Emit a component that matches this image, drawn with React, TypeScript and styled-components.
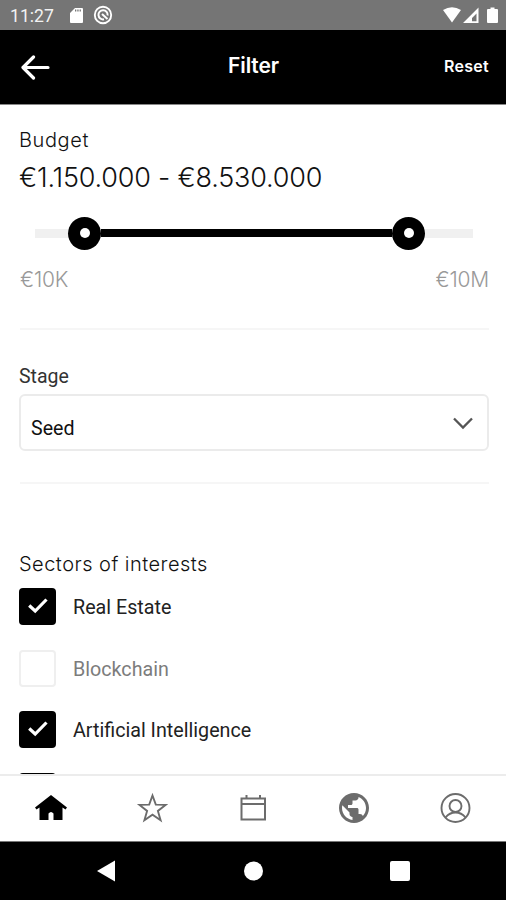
import React from "react";
import styled, { createGlobalStyle } from "styled-components";
import { MdPublic } from "react-icons/md";

const GlobalStyle = createGlobalStyle`
  * { box-sizing: border-box; }
  html, body { margin: 0; padding: 0; background: #fff; }
  body { font-family: Roboto, "Liberation Sans", sans-serif; color: #111; }
  svg { display: block; }
`;

const Screen = styled.div`
  width: 506px;
  height: 900px;
  display: flex;
  flex-direction: column;
  overflow: hidden;
  background: #fff;
`;

const StatusBar = styled.div`
  flex: none;
  height: 30px;
  display: flex;
  justify-content: space-between;
  padding: 0 6px 0 10px;
  background: #757575;
  color: #fff;
`;

const StatusGroup = styled.div`
  display: flex;
  align-items: center;
`;

const Clock = styled.span`
  width: 58px;
  padding-top: 1px;
  font-size: 17.6px;
  line-height: 28px;
  color: #f2f2f2;
`;

const Header = styled.header`
  flex: none;
  height: 75px;
  display: grid;
  grid-template-columns: 1fr auto 1fr;
  align-items: center;
  padding: 0 17px 2px 20px;
  background: #000;
  border-bottom: 1px solid #888;
  color: #fff;
`;

const IconButton = styled.button`
  width: 30px;
  padding: 2px 0 0;
  border: 0;
  background: none;
  color: inherit;
`;

const Title = styled.h1`
  margin: 0 2px 0 0;
  font: 600 21px/30px Inter, sans-serif;
  letter-spacing: -0.1px;
`;

const ResetButton = styled.button`
  justify-self: end;
  padding: 0;
  border: 0;
  background: none;
  color: inherit;
  font: 600 16px/24px Inter, sans-serif;
  letter-spacing: 0.3px;
`;

const Content = styled.main`
  flex: 1;
  min-height: 0;
  overflow: hidden;
  padding: 21px 17px 0 20px;
`;

const Label = styled.div<{ $spacing?: number }>`
  height: 28px;
  margin-left: -1px;
  font: 300 20px/28px Inter, sans-serif;
  letter-spacing: ${(p) => p.$spacing ?? 0}px;
  white-space: nowrap;
  color: #111;
`;

const FieldLabel = styled(Label)`
  font: 400 19.5px/28px Roboto, sans-serif;
  color: #333;
`;

const Amount = styled.div`
  height: 48px;
  margin-left: -1px;
  font: 300 27px/48px Inter, sans-serif;
  letter-spacing: -0.2px;
  white-space: nowrap;
  color: #111;
`;

const Slider = styled.div`
  display: flex;
  align-items: center;
  height: 34px;
  margin: 14px 15px 0;
`;

const Rail = styled.div<{ $active?: boolean; $width: number }>`
  width: ${(p) => p.$width}px;
  height: ${(p) => (p.$active ? 8 : 9)}px;
  background: ${(p) => (p.$active ? "#000" : "#f0f0f0")};
`;

const Thumb = styled.div`
  display: grid;
  place-items: center;
  width: 33px;
  height: 33px;
  border-radius: 50%;
  background: #000;
  &::after {
    content: "";
    width: 10px;
    height: 10px;
    border-radius: 50%;
    background: #fff;
  }
`;

const Bounds = styled.div`
  display: flex;
  justify-content: space-between;
  height: 30px;
  margin-top: 15px;
  font: 300 21px/30px Inter, sans-serif;
  letter-spacing: -0.2px;
  color: #999;
`;

const Divider = styled.hr<{ $top: number; $bottom: number }>`
  height: 2px;
  margin: ${(p) => p.$top}px 0 ${(p) => p.$bottom}px;
  border: 0;
  background: #f6f6f6;
`;

const Select = styled.div`
  display: flex;
  align-items: center;
  justify-content: space-between;
  height: 57px;
  margin: 3px 0 0 -1px;
  padding: 11px 14px 0 10px;
  border: 2px solid #ebebeb;
  border-radius: 6px;
  font-size: 19.6px;
  color: #111;
  svg { margin-top: -9px; }
`;

const Options = styled.div`
  padding-top: 10px;
`;

const Option = styled.label<{ $checked: boolean }>`
  display: flex;
  align-items: center;
  height: 37px;
  margin: 0 0 24.5px -1px;
  gap: 17px;
  font-size: 19.7px;
  white-space: nowrap;
  color: ${(p) => (p.$checked ? "#222" : "#7c7c7c")};
`;

const OptionName = styled.span`
  padding-top: 2px;
`;

const Box = styled.span<{ $checked: boolean }>`
  display: flex;
  align-items: center;
  justify-content: center;
  width: 37px;
  height: 37px;
  padding-bottom: 1px;
  border: ${(p) => (p.$checked ? "0" : "2px solid #efefef")};
  border-radius: 4px;
  background: ${(p) => (p.$checked ? "#000" : "#fff")};
`;

const TabBar = styled.nav`
  flex: none;
  height: 68px;
  display: grid;
  grid-template-columns: repeat(5, 1fr);
  place-items: center;
  padding-bottom: 2px;
  border-top: 2px solid #ececec;
  border-bottom: 1px solid #777;
  background: #fff;
  color: #6c6c6c;
`;

const SystemBar = styled.div`
  flex: none;
  height: 58px;
  display: flex;
  align-items: center;
  justify-content: space-between;
  padding: 0 96px;
  background: #000;
`;

const Check = () => (
  <svg width="20" height="16" viewBox="0 0 20 16" fill="none" stroke="#fff" strokeWidth="3.2">
    <path d="M1.200 7.500 7.200 13 18.500 1.500" />
  </svg>
);

const sectors = [
  { name: "Real Estate", checked: true },
  { name: "Blockchain", checked: false },
  { name: "Artificial Intelligence", checked: true },
  { name: "", checked: true },
];

export default function App() {
  return (
    <Screen>
      <GlobalStyle />
      <StatusBar>
        <StatusGroup>
          <Clock>11:27</Clock>
          <svg width="52" height="20" viewBox="0 0 52 20" fill="#fff">
            <path fillRule="evenodd" d="M7 3h7q1 0 1 1v13q0 1-1 1H3q-1 0-1-1V8z M7 4.500V6.500h1.300V4.500z M9.300 4.500V6.500h1.300V4.500z M11.600 4.500V6.500h1.300V4.500z" />
            <g fill="none" stroke="#fff">
              <circle cx="35" cy="10" r="8.200" strokeWidth="1.900" />
              <path d="M36 14.300A4.600 4.600 0 1 1 39.600 10.500M39.500 14 34 9" strokeWidth="2" />
            </g>
          </svg>
        </StatusGroup>
        <StatusGroup>
          <svg width="58" height="20" viewBox="0 0 58 20" fill="#fff">
            <path d="M1 5Q10-.5 19 5L10 17.500z" />
            <path fillRule="evenodd" d="M36.500 2.500V18H21z M34.500 8.500 30 13V16.200H34.500z" />
            <path d="M46 4h2.500V2.500h4V4H55q1 0 1 1V17q0 1-1 1h-9q-1 0-1-1V5q0-1 1-1z" />
          </svg>
        </StatusGroup>
      </StatusBar>
      <Header>
        <IconButton aria-label="Back">
          <svg width="30" height="26" viewBox="0 0 30 26" fill="none" stroke="#fff" strokeWidth="3.200" strokeLinecap="round" strokeLinejoin="round">
            <path d="M28 13.500H3.500M13.500 3 3 13.500 13.500 24" />
          </svg>
        </IconButton>
        <Title>Filter</Title>
        <ResetButton>Reset</ResetButton>
      </Header>
      <Content>
        <Label $spacing={0.6}>Budget</Label>
        <Amount>€1.150.000 - €8.530.000</Amount>
        <Slider>
          <Rail $width={33} />
          <Thumb />
          <Rail $active $width={291} />
          <Thumb />
          <Rail $width={48} />
        </Slider>
        <Bounds>
          <span>€10K</span>
          <span>€10M</span>
        </Bounds>
        <Divider $top={33} $bottom={33} />
        <FieldLabel>Stage</FieldLabel>
        <Select>
          Seed
          <svg width="20" height="13" viewBox="0 0 20 13" fill="none" stroke="#555" strokeWidth="2.300">
            <path d="M1 1.500 10 10.500 19 1.500" />
          </svg>
        </Select>
        <Divider $top={31} $bottom={66} />
        <Label $spacing={0.48}>Sectors of interests</Label>
        <Options>
          {sectors.map((s, i) => (
            <Option key={i} $checked={s.checked}>
              <Box $checked={s.checked}>{s.checked && <Check />}</Box>
              <OptionName>{s.name}</OptionName>
            </Option>
          ))}
        </Options>
      </Content>
      <TabBar>
        <svg width="34" height="30" viewBox="0 0 34 30" fill="#000">
          <path d="M17 2 33 14.500 31.500 16.500 28.500 14.500V27H19.500V20.500Q17 17.500 14.500 20.500V27H5.500V14.500L2.500 16.500 1 14.500z" />
        </svg>
        <svg width="32" height="32" viewBox="0 0 32 32" fill="none" stroke="currentColor" strokeWidth="1.900">
          <path d="M16.500 3.500 19.800 12.600 29.500 12.900 21.900 18.900 24.600 28.200 16.500 22.700 8.400 28.200 11.100 18.900 3.500 12.900 13.200 12.600z" />
        </svg>
        <svg width="28" height="30" viewBox="0 0 28 30" fill="none" stroke="currentColor" strokeWidth="2">
          <path d="M2.500 5.500H26V26.500H2.500zM2.500 11H26M7.500 2V6M21 2V6" />
        </svg>
        <MdPublic size={36} />
        <svg width="32" height="32" viewBox="0 0 32 32" fill="none" stroke="currentColor" strokeWidth="1.900">
          <circle cx="16.500" cy="16" r="14" />
          <circle cx="16.500" cy="14" r="6" />
          <path d="M6.500 25.500Q10.500 20.500 16.500 20.500T26.500 25.500" />
        </svg>
      </TabBar>
      <SystemBar>
        <svg width="20" height="22" viewBox="0 0 20 22" fill="#fff"><path d="M1 11 19 .5v21z" /></svg>
        <svg width="20" height="20" viewBox="0 0 20 20" fill="#fff"><circle cx="10.500" cy="10" r="9.500" /></svg>
        <svg width="20" height="20" viewBox="0 0 20 20" fill="#fff"><rect width="20" height="20" rx="2" /></svg>
      </SystemBar>
    </Screen>
  );
}
